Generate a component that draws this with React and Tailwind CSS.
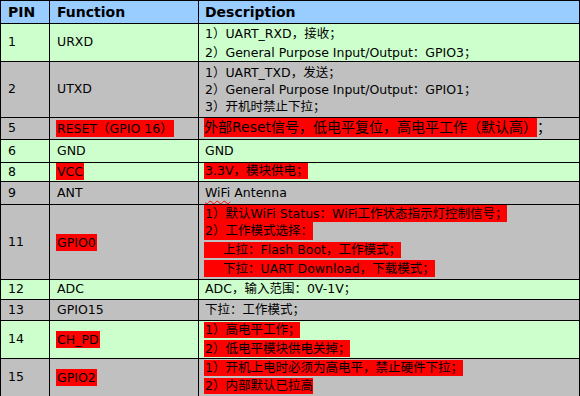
import React from 'react';

// pin table, row heights measured off the reference
const RED = 'bg-[#ff0000]';

function RedLine({ children, className = '' }) {
  return (
    <div className="flex">
      <span className={`${RED} whitespace-nowrap pl-px ${className}`}>{children}</span>
    </div>
  );
}

function Plain({ lines, lineCls }) {
  return lines.map((t, i) => (
    <div key={i} className={`whitespace-nowrap pl-px ${lineCls}`}>{t}</div>
  ));
}

const ROWS = [
  {
    pin: '1',
    fn: 'URXD',
    bg: 'bg-[#ccffcc]',
    h: 'h-[38px]',
    descCls: 'flex flex-col',
    desc: <Plain lineCls="h-[19px] leading-[19px]" lines={['1）UART_RXD，接收；', '2）General Purpose Input/Output：GPIO3；']} />,
  },
  {
    pin: '2',
    fn: 'UTXD',
    bg: 'bg-[#c0c0c0]',
    h: 'h-[56px]',
    descCls: 'flex flex-col pt-[2px]',
    desc: (
      <Plain
        lineCls="h-[17px] leading-[17px]"
        lines={['1）UART_TXD，发送；', '2）General Purpose Input/Output：GPIO1；', '3）开机时禁止下拉；']}
      />
    ),
  },
  {
    pin: '5',
    fn: 'RESET（GPIO 16）',
    fnRed: true,
    bg: 'bg-[#c0c0c0]',
    h: 'h-[22px]',
    descCls: 'flex items-start',
    desc: (
      <>
        <span className={`${RED} h-[19px] leading-[19px] text-[14px] whitespace-nowrap`}>外部Reset信号，低电平复位，高电平工作（默认高）</span>
        <span className="h-[19px] leading-[19px] text-[14px]">；</span>
      </>
    ),
  },
  {
    pin: '6',
    fn: 'GND',
    bg: 'bg-[#ccffcc]',
    h: 'h-[23px]',
    descCls: 'flex items-center',
    desc: <span className="pl-px">GND</span>,
  },
  {
    pin: '8',
    fn: 'VCC',
    fnRed: true,
    fnTop: true,
    bg: 'bg-[#ccffcc]',
    h: 'h-[19px]',
    descCls: 'flex items-start',
    desc: <span className={`${RED} h-[16px] leading-[16px] pl-px whitespace-nowrap`}>3.3V，模块供电；</span>,
  },
  {
    pin: '9',
    fn: 'ANT',
    bg: 'bg-[#c0c0c0]',
    h: 'h-[23px]',
    descCls: 'flex items-center',
    desc: (
      <span className="pl-px">
        <span className="underline decoration-wavy decoration-[#ff0000] decoration-1 underline-offset-[3px]">WiFi</span> Antenna
      </span>
    ),
  },
  {
    pin: '11',
    fn: 'GPIO0',
    fnRed: true,
    bg: 'bg-[#c0c0c0]',
    h: 'h-[75px]',
    descCls: 'flex flex-col',
    desc: (
      <>
        <RedLine className="h-[17px] leading-[17px]">1）默认WiFi Status：WiFi工作状态指示灯控制信号；</RedLine>
        <RedLine className="h-[18px] leading-[18px]">2）工作模式选择：</RedLine>
        <div className="mt-[2px] flex">
          <span className={`${RED} h-[16px] leading-[16px] pl-[19px] whitespace-nowrap`}>上拉：Flash Boot，工作模式；</span>
        </div>
        <div className="mt-[2px] flex">
          <span className={`${RED} h-[17px] leading-[17px] pl-[19px] whitespace-nowrap`}>下拉：UART Download，下载模式；</span>
        </div>
      </>
    ),
  },
  {
    pin: '12',
    fn: 'ADC',
    bg: 'bg-[#ccffcc]',
    h: 'h-[20px]',
    descCls: 'flex items-center',
    desc: <span className="pl-px">ADC，输入范围：0V-1V；</span>,
  },
  {
    pin: '13',
    fn: 'GPIO15',
    bg: 'bg-[#c0c0c0]',
    h: 'h-[21px]',
    descCls: 'flex items-center',
    desc: <span className="pl-px">下拉：工作模式；</span>,
  },
  {
    pin: '14',
    fn: 'CH_PD',
    fnRed: true,
    bg: 'bg-[#ccffcc]',
    h: 'h-[38px]',
    descCls: 'flex flex-col pt-px',
    desc: (
      <>
        <RedLine className="h-[16px] leading-[16px]">1）高电平工作；</RedLine>
        <div className="mt-[2px]" />
        <RedLine className="h-[17px] leading-[17px]">2）低电平模块供电关掉；</RedLine>
      </>
    ),
  },
  {
    pin: '15',
    fn: 'GPIO2',
    fnRed: true,
    bg: 'bg-[#c0c0c0]',
    h: 'h-[38px]',
    descCls: 'flex flex-col pt-px',
    desc: (
      <>
        <RedLine className="h-[16px] leading-[16px]">1）开机上电时必须为高电平，禁止硬件下拉；</RedLine>
        <div className="mt-[2px]" />
        <RedLine className="h-[16px] leading-[16px]">2）内部默认已拉高</RedLine>
      </>
    ),
  },
];

export default function App() {
  return (
    <div className="w-[580px] h-[396px] overflow-hidden bg-white text-black font-['DejaVu_Sans','Noto_Sans_CJK_SC',sans-serif] text-[12.5px]">
      <div className="w-[580px] border-l border-t border-r border-black">
        {/* header */}
        <div className="flex h-[23px] border-b border-black bg-[#99ccff] text-[14px] font-bold">
          <div className="w-[49px] shrink-0 border-r border-black flex items-center pl-[7px]">PIN</div>
          <div className="w-[149px] shrink-0 border-r border-black flex items-center pl-[7px]">Function</div>
          <div className="flex-1 flex items-center pl-[6px]">Description</div>
        </div>

        {ROWS.map((row) => (
          <div key={row.pin} className={`flex border-b border-black ${row.bg} ${row.h}`}>
            <div className="w-[49px] shrink-0 border-r border-black flex items-center pl-[7px]">{row.pin}</div>
            <div
              className={`w-[149px] shrink-0 border-r border-black flex pl-[6px] ${row.fnTop ? 'items-start' : 'items-center'}`}
            >
              {row.fnRed ? (
                <span className={`${RED} h-[17px] leading-[17px] px-px whitespace-nowrap`}>{row.fn}</span>
              ) : (
                <span className="pl-px">{row.fn}</span>
              )}
            </div>
            <div className={`flex-1 min-w-0 pl-[5px] ${row.descCls}`}>{row.desc}</div>
          </div>
        ))}
      </div>
    </div>
  );
}
